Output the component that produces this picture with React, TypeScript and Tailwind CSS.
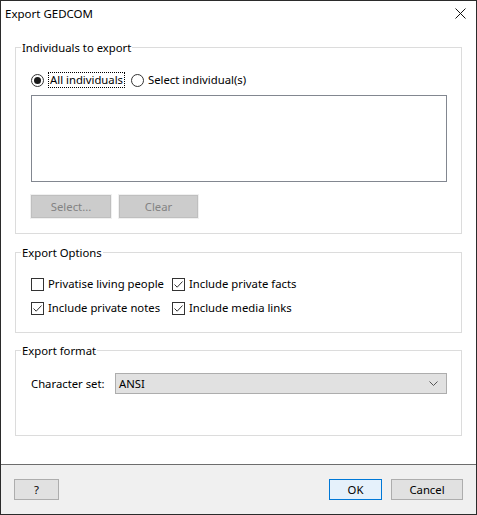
import React from "react";

const font = { fontFamily: '"Noto Sans", "Open Sans", sans-serif' };

function Radio({ checked }: { checked?: boolean }) {
  return (
    <span className="w-[13px] h-[13px] rounded-full border border-[#333333] bg-white flex items-center justify-center shrink-0">
      {checked && <span className="w-[7px] h-[7px] rounded-full bg-[#1a1a1a]" />}
    </span>
  );
}

function Check({ checked }: { checked?: boolean }) {
  return (
    <span className="w-[13px] h-[13px] border border-[#333333] bg-white flex items-center justify-center shrink-0">
      {checked && (
        <svg width="11" height="11" viewBox="0 0 11 11">
          <path d="M1.5 5.5 L4.2 8.2 L9.5 2.5" fill="none" stroke="#333333" strokeWidth="1" />
        </svg>
      )}
    </span>
  );
}

function Group({ title, children, className }: { title: string; children: React.ReactNode; className: string }) {
  return (
    <fieldset className={`border border-[#dcdcdc] ${className}`}>
      <legend className="ml-[-10px] px-px text-[11.3px] leading-[15px] text-black">{title}</legend>
      {children}
    </fieldset>
  );
}

export default function App() {
  return (
    <div
      style={font}
      className="w-[477px] h-[515px] border border-[#2b2b2b] bg-white flex flex-col text-[11.3px] text-black leading-[16px]"
    >
      <div className="h-[31px] flex items-start justify-between pl-[4px] pr-[10px] pt-[5px]">
        <span className="text-[11.5px] leading-[16px]">Export GEDCOM</span>
        <svg width="11" height="11" viewBox="0 0 11 11" className="mt-[2px]">
          <path d="M0.5 0.5 L10.5 10.5 M10.5 0.5 L0.5 10.5" stroke="#111" strokeWidth="1" />
        </svg>
      </div>

      <div className="flex-1 flex flex-col px-[14px] pt-[8px]">
        <Group title="Individuals to export" className="pl-[15px] pr-[14px] pt-[17px] pb-[15px]">
          <div className="flex items-center h-[16px]">
            <Radio checked />
            <span className="ml-[4px] px-px border border-dotted border-black leading-[14px]">All individuals</span>
            <span className="ml-[6px]"><Radio /></span>
            <span className="ml-[4px]">Select individual(s)</span>
          </div>
          <div className="mt-[7px] h-[87px] w-[416px] border border-[#828790] bg-white" />
          <div className="mt-[13px] flex gap-[8px]">
            <button className="w-[80px] h-[23px] border border-[#bfbfbf] bg-[#cccccc] text-[#838383] text-[11.3px] ring-1 ring-[#f0f0f0]">
              Select...
            </button>
            <button className="w-[79px] h-[23px] border border-[#bfbfbf] bg-[#cccccc] text-[#838383] text-[11.3px] ring-1 ring-[#f0f0f0]">
              Clear
            </button>
          </div>
        </Group>

        <Group title="Export Options" className="mt-[11px] pl-[15px] pr-[14px] pt-[16px] pb-[16px]">
          <div className="grid grid-cols-[max-content_max-content] gap-x-[8px] gap-y-[8px]">
            <label className="flex items-center h-[16px] gap-[4px]"><Check /><span>Privatise living people</span></label>
            <label className="flex items-center h-[16px] gap-[4px]"><Check checked /><span>Include private facts</span></label>
            <label className="flex items-center h-[16px] gap-[4px]"><Check checked /><span>Include private notes</span></label>
            <label className="flex items-center h-[16px] gap-[4px]"><Check checked /><span>Include media links</span></label>
          </div>
        </Group>

        <Group title="Export format" className="mt-[10px] pl-[15px] pr-[14px] pt-[15px] pb-[41px]">
          <div className="flex items-center">
            <span className="w-[84px]">Character set:</span>
            <div className="flex-1 h-[21px] border border-[#adadad] bg-[#e1e1e1] flex items-center justify-between pl-[3px] pr-[8px]">
              <span>ANSI</span>
              <svg width="9" height="6" viewBox="0 0 9 6">
                <path d="M0.5 0.5 L4.5 4.5 L8.5 0.5" fill="none" stroke="#555" strokeWidth="1" />
              </svg>
            </div>
          </div>
        </Group>
      </div>

      <div className="h-[50px] border-t border-[#6d6d6d] bg-[#f0f0f0] flex items-start pt-[14px] pl-[13px] pr-[13px]">
        <button className="w-[45px] h-[21px] border border-[#adadad] bg-[#e1e1e1] text-[11.3px]">?</button>
        <div className="flex-1" />
        <button className="w-[53px] h-[21px] border border-[#0078d7] bg-[#e5f1fb] text-[11.3px]">OK</button>
        <button className="ml-[9px] w-[72px] h-[21px] border border-[#adadad] bg-[#e1e1e1] text-[11.3px]">Cancel</button>
      </div>
    </div>
  );
}
